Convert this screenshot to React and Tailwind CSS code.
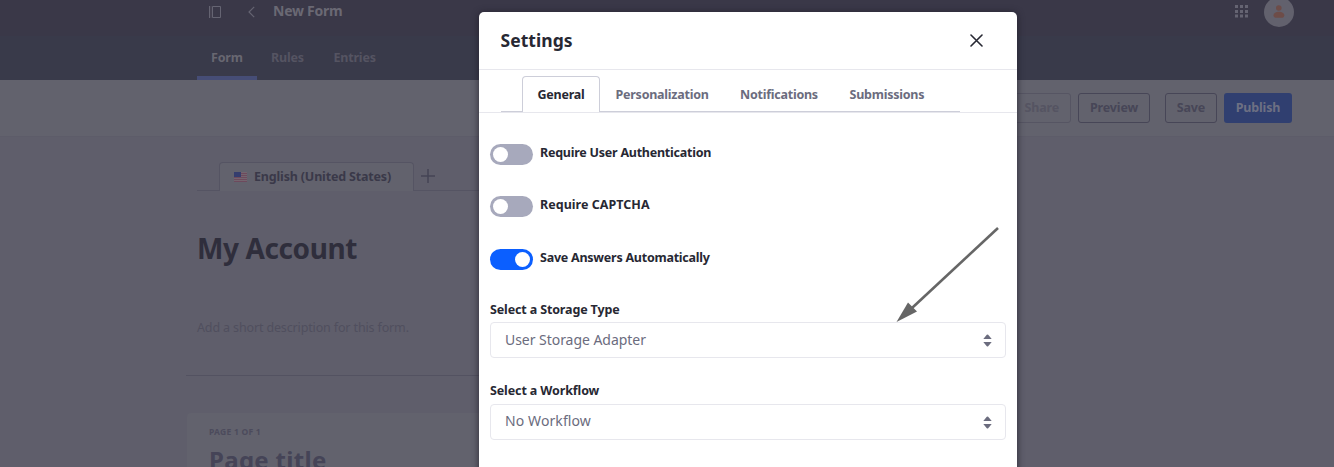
import React from "react";

function Flag() {
  return (
    <svg width="13" height="10" viewBox="0 0 13 10" className="shrink-0">
      <rect width="13" height="10" fill="#74656f" />
      {[1, 3, 5, 7, 9].map((y) => (
        <rect key={y} y={y} width="13" height="1" fill="#6d4a5d" />
      ))}
      <rect width="7" height="5" fill="#353d6e" />
    </svg>
  );
}

function Switch({ on, label, className = "", tracking = "tracking-[-0.24px]" }) {
  return (
    <div className={`flex h-[21px] items-start ${className}`}>
      <div
        className={`flex h-[21px] w-[43px] shrink-0 items-center rounded-full px-[3px] ${
          on ? "justify-end bg-[#0b5fff]" : "bg-[#a7a9bc]"
        }`}
      >
        <div className="size-[15px] rounded-full bg-white" />
      </div>
      <span className={`ml-[7px] text-[12.5px] leading-[17px] font-bold text-[#272833] ${tracking}`}>{label}</span>
    </div>
  );
}

function Select({ value, className = "" }) {
  return (
    <div className="flex h-9 items-center justify-between rounded-[4px] border border-[#e7e7ed] pr-[13.5px] pl-[14px] text-[#6b6c7e]">
      <span className={`text-[14px] leading-5 ${className}`}>{value}</span>
      <svg width="9" height="13" viewBox="0 0 9 13" fill="#6b6c7e" className="mt-px">
        <path d="M.3 5.1 3.8.8Q4.5.1 5.2.8L8.7 5.1Z" />
        <path d="M.3 8 3.8 12.2Q4.5 12.9 5.2 12.2L8.7 8Z" />
      </svg>
    </div>
  );
}

function Page() {
  return (
    <div className="flex h-full flex-col">
      <header className="flex h-9 items-start justify-between bg-[#3a3848] pr-10 pl-[209px]">
        <div className="flex h-6 items-center text-[#656472]">
          <svg width="12" height="12" viewBox="0 0 12 12" fill="none" stroke="currentColor">
            <path d="M.5 0V12M3.5.5H11.5V11.5H3.5Z" />
            <path d="M2 0V12" opacity=".45" />
          </svg>
          <svg width="7" height="12" viewBox="0 0 7 12" fill="none" stroke="currentColor" strokeWidth="1.2" className="ml-[27px]">
            <path d="M6.2.8 1 6l5.2 5.2" />
          </svg>
          <span className="ml-[18px] -mt-[2px] text-[14px] leading-5 font-bold tracking-[-0.25px] text-[#6a6974]">New Form</span>
        </div>
        <div className="flex items-start">
          <svg width="13" height="13" viewBox="0 0 13 13" fill="#656472" className="mt-[5px]">
            {[0, 5, 10].map((y) =>
              [0, 5, 10].map((x) => <rect key={`${x}-${y}`} x={x} y={y - (y > 5 ? 0.5 : 0)} width="3" height="3" />)
            )}
          </svg>
          <div className="-mt-[3px] ml-4 flex size-[30px] items-center justify-center rounded-full bg-[#62616d]">
            <svg width="12" height="13" viewBox="0 0 12 13" fill="#6d4c48" className="-mt-[2px]">
              <circle cx="5.8" cy="3" r="2.8" />
              <path d="M.5 10.3C.5 5.6 11.3 5.6 11.3 10.3Q11.3 12.7 9.5 12.7H2.3Q.5 12.7.5 10.3Z" />
            </svg>
          </div>
        </div>
      </header>
      <nav className="flex h-11 items-stretch bg-[#393a4a] pl-[197px] text-[12.5px] leading-10 font-bold tracking-[-0.2px] text-[#555462]">
        <span className="w-[60px] border-b-4 border-[#464d76] pt-[2px] pl-[14px] text-[#686771]">Form</span>
        <span className="w-[62px] pt-[2px] pl-[14px]">Rules</span>
        <span className="pt-[2px] pl-[14.5px]">Entries</span>
      </nav>
      <div className="flex h-[57px] shrink-0 items-start justify-end border-b border-[#5d5c69] bg-[#62626d] pt-[13px] pr-[42px] text-[12.5px] font-bold tracking-[-0.15px] text-[#474657]">
        <span className="flex h-[30px] w-[75px] items-center justify-end rounded-[3px] border border-[#565563] pr-[11px] text-[#555462]">Share</span>
        <span className="ml-[7px] flex h-[30px] w-[72px] items-center justify-center rounded-[3px] border border-[#474657]">Preview</span>
        <span className="ml-[15px] flex h-[30px] w-[52px] items-center justify-center rounded-[3px] border border-[#474657]">Save</span>
        <span className="ml-[7px] flex h-[30px] w-[68px] items-center justify-center rounded-[3px] bg-[#303f70] text-[#6d7083]">Publish</span>
      </div>
      <main className="flex grow flex-col bg-[#5f5e6b] pt-[25px] pl-[186px]">
        <div className="ml-[11px] flex h-[29px] w-[760px] items-stretch">
          <div className="w-[22px] border-b border-[#555463]" />
          <div className="flex w-[195px] items-center rounded-t-[4px] border border-b-0 border-[#555463] bg-[#62626d] pl-[14px]">
            <Flag />
            <span className="ml-[7px] text-[12.5px] font-bold tracking-[-0.17px] text-[#3a3949]">English (United States)</span>
          </div>
          <div className="flex grow items-center border-b border-[#555463] pl-[7px]">
            <svg width="14" height="14" viewBox="0 0 14 14" stroke="#454456" strokeWidth="1.5">
              <path d="M7 0V14M0 7H14" />
            </svg>
          </div>
        </div>
        <h1 className="mt-[37px] ml-[11px] text-[28px] leading-10 font-bold tracking-[-0.4px] text-[#2f2e3c]">My Account</h1>
        <p className="mt-[50px] ml-[11px] text-[12.5px] leading-[20px] tracking-[-0.14px] text-[#504f5e]">Add a short description for this form.</p>
        <div className="mt-[37px] w-[780px] border-b border-[#535261]" />
        <section className="mt-[37px] ml-px h-[54px] w-[780px] shrink-0 rounded-t-[4px] bg-[#62626d] pl-[22px]">
          <div className="pt-[13px] text-[8.5px] leading-3 font-bold tracking-[0.25px] text-[#4c4b5c]">PAGE 1 OF 1</div>
          <h2 className="mt-[6px] text-[24px] leading-[32px] font-bold tracking-[0.3px] text-[#454457]">Page title</h2>
        </section>
      </main>
    </div>
  );
}

function SettingsModal() {
  return (
    <div className="absolute top-3 left-[479px] h-[460px] w-[538px] rounded-t-[5px] bg-white shadow-[0_1px_6px_1px_rgba(30,28,40,0.65)]">
      <div className="flex h-[58px] items-center justify-between border-b border-[#e7e7ed] pr-[34.5px] pl-[21.5px] text-[#272833]">
        <h3 className="-mt-px text-[17.5px] leading-6 font-bold tracking-[0.05px]">Settings</h3>
        <svg width="13" height="13" viewBox="0 0 13 13" fill="none" stroke="currentColor" strokeWidth="1.6" strokeLinecap="round">
          <path d="M1 1 12 12M12 1 1 12" />
        </svg>
      </div>
      <div className="flex h-[43px] items-start border-b border-[#e7e7ed] pt-[6px] pl-[22px] text-[12.5px] leading-[35px] font-bold tracking-[-0.24px] text-[#6b6c7e]">
        <div className="h-9 w-[21px] border-b border-[#cdced9]" />
        <div className="h-9 w-[78px] rounded-t-[4px] border border-b-0 border-[#cdced9] pl-[14.5px] text-[#272833]">General</div>
        <div className="flex h-9 w-[360px] border-b border-[#cdced9] pt-px">
          <span className="w-[125px] pl-[15.5px]">Personalization</span>
          <span className="w-[109px] pl-[15px]">Notifications</span>
          <span className="pl-[15.5px]">Submissions</span>
        </div>
      </div>
      <div className="px-[11px] pt-[31px]">
        <Switch label="Require User Authentication" />
        <Switch label="Require CAPTCHA" className="mt-[31px]" tracking="tracking-[0.03px]" />
        <Switch label="Save Answers Automatically" on className="mt-[32px]" />
        <div className="mt-[31px] mb-[3px] text-[12.5px] leading-[18px] font-bold tracking-[-0.14px] text-[#272833]">Select a Storage Type</div>
        <Select value="User Storage Adapter" className="tracking-[-0.04px]" />
        <div className="mt-[24px] mb-[4px] text-[12.5px] leading-[18px] font-bold tracking-[-0.12px] text-[#272833]">Select a Workflow</div>
        <Select value="No Workflow" className="-mt-[2px] tracking-[0.1px]" />
      </div>
    </div>
  );
}

export default function App() {
  return (
    <div className="relative h-[467px] w-[1334px] overflow-hidden bg-[#5f5e6b] font-['Noto_Sans',sans-serif] whitespace-nowrap">
      <Page />
      <SettingsModal />
      <svg width="104" height="97" viewBox="0 0 104 97" className="absolute top-[226px] left-[895px]">
        <path d="M103 2 17 82" stroke="#666" strokeWidth="2.6" />
        <path d="M1.5 96 13 76.5 22 85.5Z" fill="#666" />
      </svg>
    </div>
  );
}
